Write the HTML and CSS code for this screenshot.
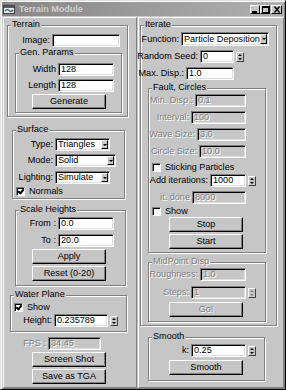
FILE: index.html
```html
<!DOCTYPE html>
<html>
<head>
<meta charset="utf-8">
<link rel="stylesheet" href="styles.css">
</head>
<body>
<div class="window">
  <div class="titlebar">
    <svg class="app-icon" width="12" height="9" viewBox="0 0 12 9">
      <rect x="0.5" y="0.5" width="11" height="8" fill="#e8e8e8" stroke="#404040"/>
      <rect x="1" y="1" width="10" height="2" fill="#5a5a5a"/>
      <path d="M2 6 Q4 3.5 6 5.5 T10 5" fill="none" stroke="#3a6a78" stroke-width="1.4"/>
    </svg>
    <span class="title">Terrain Module</span>
    <div class="tb-buttons">
      <span class="tb-btn"><svg width="8" height="7" viewBox="0 0 8 7"><rect x="1" y="5" width="5" height="2" fill="#000"/></svg></span>
      <span class="tb-btn"><svg width="8" height="7" viewBox="0 0 8 7"><rect x="1.5" y="0.5" width="6" height="6" fill="none" stroke="#000"/><rect x="1" y="0" width="7" height="2" fill="#000"/></svg></span>
      <span class="tb-btn tb-close"><svg width="8" height="7" viewBox="0 0 8 7"><path d="M1.5 0.5 L6.5 6.5 M6.5 0.5 L1.5 6.5" stroke="#000" stroke-width="1.4"/></svg></span>
    </div>
  </div>
  <div class="client">
    <div class="col col-left">
      <div class="group g-terrain">
        <span class="gtitle">Terrain</span>
        <div class="row r-image"><span class="lbl">Image:</span><span class="field w68"></span></div>
        <div class="group g-gen">
          <span class="gtitle">Gen. Params</span>
          <div class="row r-width"><span class="lbl">Width</span><span class="field w56">128</span></div>
          <div class="row r-length"><span class="lbl">Length</span><span class="field w56">128</span></div>
          <div class="btn b-gen">Generate</div>
        </div>
      </div>

      <div class="group g-surface">
        <span class="gtitle">Surface</span>
        <div class="row r-type"><span class="lbl">Type:</span><span class="select w55">Triangles<span class="arrow"></span></span></div>
        <div class="row r-mode"><span class="lbl">Mode:</span><span class="select w61">Solid<span class="arrow"></span></span></div>
        <div class="row r-light"><span class="lbl">Lighting:</span><span class="select w55">Simulate<span class="arrow"></span></span></div>
        <div class="check c-normals"><span class="cb on"></span><span>Normals</span></div>
      </div>

      <div class="group g-scale">
        <span class="gtitle">Scale Heights</span>
        <div class="row r-from"><span class="lbl">From :</span><span class="field w56">0.0</span></div>
        <div class="row r-to"><span class="lbl">To :</span><span class="field w56">20.0</span></div>
        <div class="btn b-apply">Apply</div>
        <div class="btn b-reset">Reset (0-20)</div>
      </div>

      <div class="group g-water">
        <span class="gtitle">Water Plane</span>
        <div class="check c-show"><span class="cb on"></span><span>Show</span></div>
        <div class="row r-height"><span class="lbl">Height:</span><span class="field w54">0.235789</span><span class="spin"></span></div>
      </div>

      <div class="row r-fps"><span class="lbl dis">FPS :</span><span class="field w53 dis">34.45</span></div>
      <div class="btn b-shot">Screen Shot</div>
      <div class="btn b-tga">Save as TGA</div>
    </div>

    <div class="col col-right">
      <div class="group g-iterate">
        <span class="gtitle">Iterate</span>
        <div class="row r-func"><span class="lbl">Function:</span><span class="select w88 tall">Particle Deposition<span class="arrow"></span></span></div>
        <div class="row r-seed"><span class="lbl">Random Seed:</span><span class="field w34">0</span><span class="spin"></span></div>
        <div class="row r-maxd"><span class="lbl">Max. Disp.:</span><span class="field w48">1.0</span></div>

        <div class="group g-fault">
          <span class="gtitle">Fault, Circles</span>
          <div class="row r-min"><span class="lbl dis">Min. Disp.:</span><span class="field w51 dis">0.1</span></div>
          <div class="row r-int"><span class="lbl dis">Interval:</span><span class="field w55 dis">100</span></div>
          <div class="row r-wave"><span class="lbl dis">Wave Size:</span><span class="field w49 dis">3.0</span></div>
          <div class="row r-circ"><span class="lbl dis">Circle Size:</span><span class="field w47 dis">10.0</span></div>
          <div class="check c-stick"><span class="cb"></span><span>Sticking Particles</span></div>
          <div class="row r-add"><span class="lbl">Add iterations:</span><span class="field w36">1000</span><span class="spin"></span></div>
          <div class="row r-done"><span class="lbl dis">it. done</span><span class="field w54 dis">8000</span></div>
          <div class="check c-fshow"><span class="cb"></span><span>Show</span></div>
          <div class="btn b-stop">Stop</div>
          <div class="btn b-start">Start</div>
        </div>

        <div class="group g-mid">
          <span class="gtitle dis">MidPoint Disp</span>
          <div class="row r-rough"><span class="lbl dis">Roughness:</span><span class="field w46 dis">1.0</span></div>
          <div class="row r-steps"><span class="lbl dis">Steps:</span><span class="field w55 dis">1</span><span class="spin dis"></span></div>
          <div class="btn b-go dis">Go!</div>
        </div>
      </div>

      <div class="group g-smooth">
        <span class="gtitle">Smooth</span>
        <div class="row r-k"><span class="lbl">k:</span><span class="field w55">0.25</span><span class="spin"></span></div>
        <div class="btn b-smooth">Smooth</div>
      </div>
    </div>
  </div>
</div>
</body>
</html>
```

FILE: styles.css
```css
* { box-sizing: border-box; }

body {
  margin: 0;
  background: #c6c6c6;
  font-family: "Liberation Sans", Arial, sans-serif;
  font-size: 9.1px;
  color: #000;
}

.window {
  width: 286px;
  height: 390px;
  background: #c6c6c6;
  border: 1px solid;
  border-color: #dfdfdf #000 #000 #dfdfdf;
  box-shadow: inset 1px 1px #fff, inset -1px -1px #808080;
  padding: 1px;
  display: flex;
  flex-direction: column;
}

/* ---------- title bar ---------- */
.titlebar {
  height: 14px;
  display: flex;
  align-items: center;
  background: linear-gradient(to right, #868686, #b0b0b0);
  padding-left: 1px;
  flex: none;
}
.app-icon { flex: none; margin-right: 4px; }
.title {
  flex: 1;
  color: #d0d0d0;
  font-weight: bold;
  font-size: 9px;
  line-height: 14px;
}
.tb-buttons { display: flex; margin-right: 2px; }
.tb-btn {
  width: 10px;
  height: 9px;
  background: #c6c6c6;
  border: 1px solid;
  border-color: #fff #000 #000 #fff;
  display: flex;
  align-items: center;
  justify-content: center;
}
.tb-btn svg { display: block; }
.tb-close { margin-left: 1px; width: 11px; }

/* ---------- columns ---------- */
.client {
  flex: 1;
  display: flex;
  gap: 1px;
  padding-top: 1px;
  padding-left: 1px;
}
.col {
  border: 1px solid;
  border-color: #fff #808080 #808080 #fff;
  position: relative;
}
.col-left { width: 134px; }
.col-right { width: 146px; }

/* ---------- group boxes ---------- */
.group {
  position: relative;
  border: 1px solid #808080;
  box-shadow: inset 1px 1px #fff, 1px 1px #fff;
}
.gtitle {
  position: absolute;
  top: -7px;
  left: 3px;
  padding: 0 1px;
  background: #c6c6c6;
  line-height: 11px;
  white-space: nowrap;
}

.g-terrain { margin: 7px 0 0 3px; width: 121px; padding-bottom: 3px; }
.g-gen { margin: 6px 0 0 7px; width: 107px; padding-bottom: 3px; }
.g-surface { margin: 13px 0 0 8px; width: 113px; padding-bottom: 2px; }
.g-scale { margin: 11px 0 0 11px; width: 111px; padding-bottom: 4px; }
.g-water { margin: 9px 0 0 6px; width: 117px; padding-bottom: 4px; }

.g-iterate { margin: 7px 0 0 1px; width: 137px; padding-bottom: 3px; }
.g-fault { margin: 8px 0 0 7px; width: 118px; padding-bottom: 3px; }
.g-mid { margin: 9px 0 0 7px; width: 118px; padding-bottom: 4px; }
.g-smooth { margin: 11px 0 0 9px; width: 117px; padding-bottom: 5px; }

/* ---------- rows ---------- */
.row {
  display: flex;
  justify-content: flex-end;
  align-items: center;
  gap: 2px;
  height: 13px;
}
.lbl { white-space: nowrap; line-height: 11px; }

.r-image { margin-top: 8px; padding-right: 7px; }
.r-width { margin-top: 9px; padding-right: 7px; }
.r-length { margin-top: 3px; padding-right: 7px; }
.r-type { margin-top: 7px; padding-right: 14px; }
.r-mode { margin-top: 3px; padding-right: 8px; }
.r-light { margin-top: 4px; padding-right: 14px; }
.r-from { margin-top: 6px; padding-right: 11px; }
.r-to { margin-top: 4px; padding-right: 11px; }
.r-height { margin-top: 2px; padding-right: 8px; }
.r-fps { margin-top: 5px; padding-right: 35px; }

.r-func { margin-top: 6px; padding-right: 7px; height: 14px; }
.r-seed { margin-top: 4px; padding-right: 32px; }
.r-maxd { margin-top: 4px; padding-right: 42px; }
.r-min { margin-top: 5px; padding-right: 19px; }
.r-int, .r-wave, .r-circ { margin-top: 4px; padding-right: 19px; }
.r-add { margin-top: 2px; padding-right: 9px; }
.r-done { margin-top: 4px; padding-right: 19px; }
.r-rough { margin-top: 5px; padding-right: 19px; }
.r-steps { margin-top: 5px; padding-right: 9px; }
.r-k { margin-top: 6px; padding-right: 8px; }

/* ---------- fields ---------- */
.field, .select {
  height: 13px;
  background: #fff;
  border: 1px solid;
  border-color: #808080 #fff #fff #808080;
  box-shadow: inset 1px 1px #000, inset -1px -1px #dfdfdf;
  padding-left: 2px;
  line-height: 11px;
  white-space: nowrap;
  overflow: hidden;
  flex: none;
}
.select { position: relative; }
.select.tall { height: 14px; line-height: 12px; }
.arrow {
  position: absolute;
  right: 1px;
  top: 1px;
  bottom: 1px;
  width: 7px;
  background: #c6c6c6;
  border: 1px solid;
  border-color: #fff #000 #000 #fff;
}
.arrow::after {
  content: "";
  position: absolute;
  left: 1px;
  top: 50%;
  margin-top: -1px;
  border-left: 2px solid transparent;
  border-right: 2px solid transparent;
  border-top: 2px solid #000;
}

.w34 { width: 34px; } .w36 { width: 36px; } .w46 { width: 46px; }
.w47 { width: 47px; } .w48 { width: 48px; } .w49 { width: 49px; }
.w51 { width: 51px; } .w53 { width: 53px; } .w54 { width: 54px; }
.w55 { width: 55px; } .w56 { width: 56px; } .w61 { width: 61px; }
.w68 { width: 68px; } .w88 { width: 88px; }

.dis { color: #808080; text-shadow: 1px 1px 0 #fff; }
.field.dis { background: #c6c6c6; }

/* spinner */
.spin {
  width: 8px;
  height: 10px;
  flex: none;
  position: relative;
  background: #c6c6c6;
  border: 1px solid;
  border-color: #fff #404040 #404040 #fff;
}
.spin::before, .spin::after {
  content: "";
  position: absolute;
  left: 1px;
  border-left: 2px solid transparent;
  border-right: 2px solid transparent;
}
.spin::before { top: 1px; border-bottom: 2px solid #000; }
.spin::after { bottom: 1px; border-top: 2px solid #000; }
.spin.dis::before { border-bottom-color: #808080; }
.spin.dis::after { border-top-color: #808080; }

/* ---------- checkboxes ---------- */
.check {
  display: flex;
  align-items: center;
  gap: 4px;
  height: 9px;
  line-height: 11px;
  margin-left: 3px;
}
.cb {
  width: 9px;
  height: 9px;
  flex: none;
  position: relative;
  background: #fff;
  border: 1px solid;
  border-color: #808080 #fff #fff #808080;
  box-shadow: inset 1px 1px #000;
}
.cb.on::after {
  content: "";
  position: absolute;
  left: 2px;
  top: 0px;
  width: 2px;
  height: 4px;
  border-right: 2px solid #000;
  border-bottom: 2px solid #000;
  transform: rotate(40deg);
}
.c-normals { margin-top: 3px; }
.c-show { margin-top: 7px; }
.c-stick { margin-top: 5px; }
.c-fshow { margin-top: 3px; }

/* ---------- buttons ---------- */
.btn {
  width: 74px;
  height: 15px;
  background: #c6c6c6;
  border: 1px solid;
  border-color: #fff #000 #000 #fff;
  box-shadow: inset -1px -1px #808080;
  text-align: center;
  line-height: 12px;
  white-space: nowrap;
}
.b-gen { margin: 2px 0 0 16px; }
.b-apply { margin: 2px 0 0 16px; }
.b-reset { margin: 2px 0 0 16px; }
.b-shot { margin: 2px 0 0 28px; }
.b-tga { margin: 2px 0 0 28px; }
.b-stop { margin: 1px 0 0 20px; }
.b-start { margin: 2px 0 0 20px; }
.b-go { margin: 3px 0 0 20px; }
.b-smooth { margin: 3px 0 0 20px; }
```
